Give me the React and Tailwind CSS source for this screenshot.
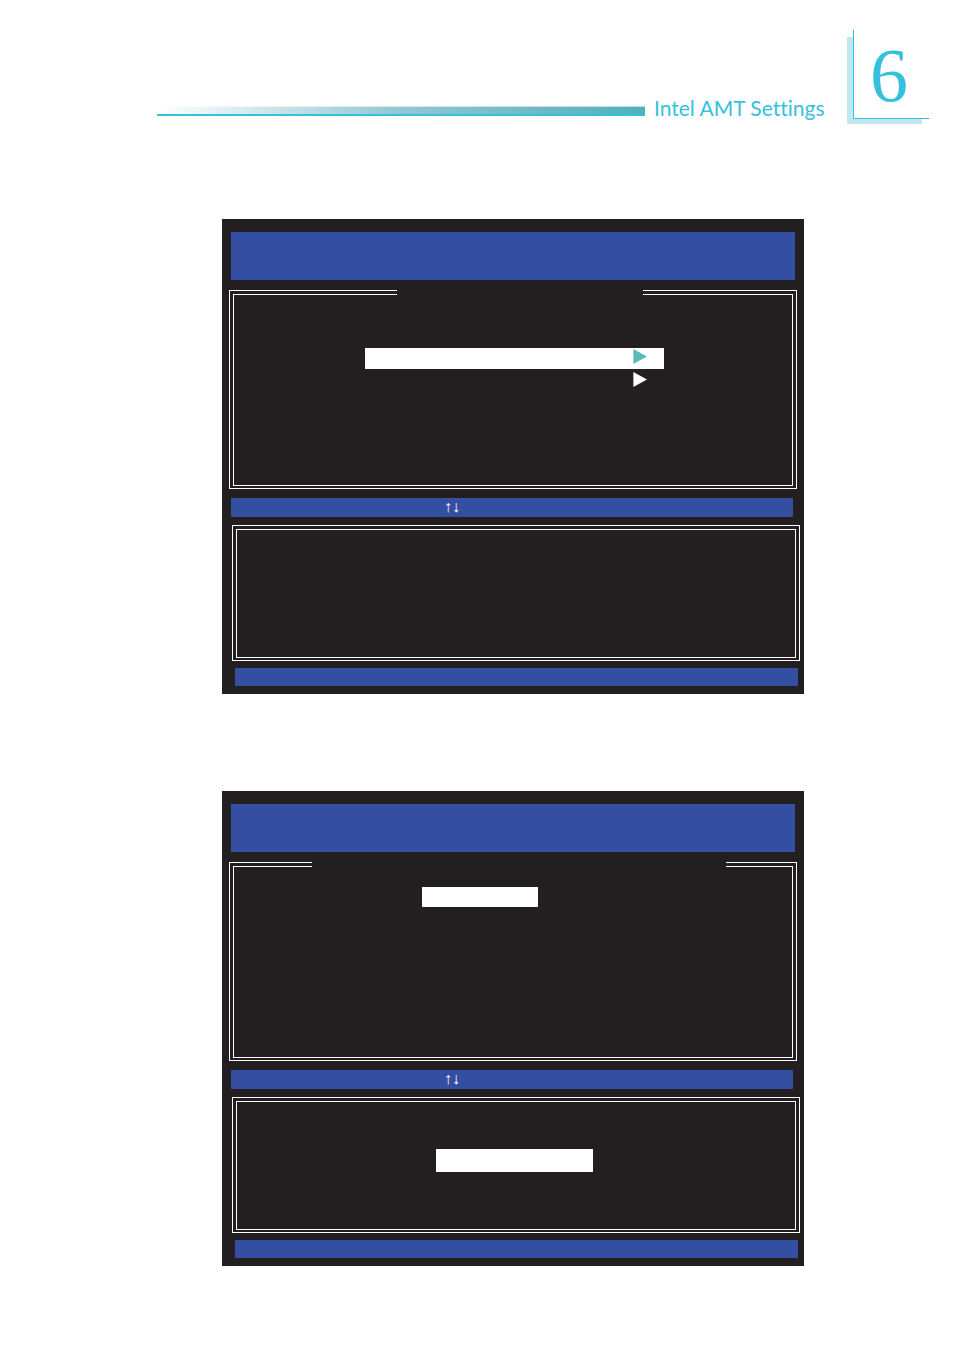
import React from 'react';

// Right-pointing marker at the end of a submenu row
const Marker = ({ className = '' }) => (
  <svg viewBox="0 0 14 15" className={`w-[14px] h-[15px] ${className}`} fill="currentColor" aria-hidden="true">
    <path d="M0.4 0 L14 7.5 L0.4 15 Z" />
  </svg>
);

// Double-line frame, the title slot interrupts the top edge
const Frame = ({ children, titleSlot = null, className = '' }) => (
  <section className={`border border-white p-[3px] pb-[2px] flex ${className}`}>
    <div className="flex-1 border border-white">
      {titleSlot && <div className={`h-[5px] -mt-[5px] bg-[#231f20] ${titleSlot}`} />}
      {children}
    </div>
  </section>
);

const BiosScreen = ({ titleSlot, menu, detail = null, className = '' }) => (
  <article className={`ml-[222px] mr-[150px] bg-[#231f20] pt-[13px] pb-2 ${className}`}>
    <header className="mx-[9px] h-12 bg-[#344ea1]" />
    <Frame titleSlot={titleSlot} className="ml-[7px] mr-[7px] mt-[10px] h-[199px]">
      {menu}
    </Frame>
    <div className="ml-[9px] mr-[11px] mt-[9px] h-[19px] pl-[213px] bg-[#344ea1] text-white font-['Liberation_Serif',serif] text-[16px] leading-[17px]">
      ↑↓
    </div>
    <Frame className="ml-[10px] mr-[4px] mt-2 h-[136px]">{detail}</Frame>
    <footer className="ml-[13px] mr-[6px] mt-[7px] h-[18px] bg-[#344ea1]" />
  </article>
);

const PageHeader = () => (
  <header className="flex items-start pl-[157px] pr-[25px] pt-[30px]">
    <div className="flex-1 mt-[76px]">
      <div className="h-2 border-t border-white/60 bg-gradient-to-r from-white via-[#91c7d3] to-[#4fb0bd]" />
      <div className="h-[2px] bg-[#35c1dd]" />
    </div>
    <h1 className="ml-[9px] mt-[64px] w-[168px] whitespace-nowrap font-['Lato',sans-serif] text-[21px] leading-[28px] text-[#35c1dd] [font-variant-ligatures:none]">
      Intel AMT Settings
    </h1>
    <div className="ml-[25px] pt-[7px] relative">
      <div className="w-[75px] h-[87px] mr-[7px] bg-[#c1e7ef]" />
      <div className="absolute left-[6px] right-0 top-0 bottom-[5px] border-l border-b border-[#35c1dd] bg-white flex items-start justify-center pr-[5px] font-['Liberation_Serif',serif] text-[76px] leading-[90px] text-[#35c1dd]">
        6
      </div>
    </div>
  </header>
);

const App = () => (
  <main className="bg-white pb-[84px]">
    <PageHeader />

    <BiosScreen
      className="mt-[95px]"
      titleSlot="ml-[163px] mr-[149px]"
      menu={
        <div className="mt-[53px] ml-[131px] mr-[128px]">
          <div className="h-[21px] pt-px pr-[17px] flex justify-end bg-white text-[#5bb8bf]">
            <Marker />
          </div>
          <div className="h-[21px] pt-[3px] pr-[17px] flex justify-end text-white">
            <Marker />
          </div>
        </div>
      }
    />

    <BiosScreen
      className="mt-[97px]"
      titleSlot="ml-[78px] mr-[66px]"
      menu={<div className="mt-5 ml-[188px] w-[116px] h-5 bg-white" />}
      detail={<div className="mt-[47px] ml-[199px] w-[157px] h-[23px] bg-white" />}
    />
  </main>
);

export default App;
